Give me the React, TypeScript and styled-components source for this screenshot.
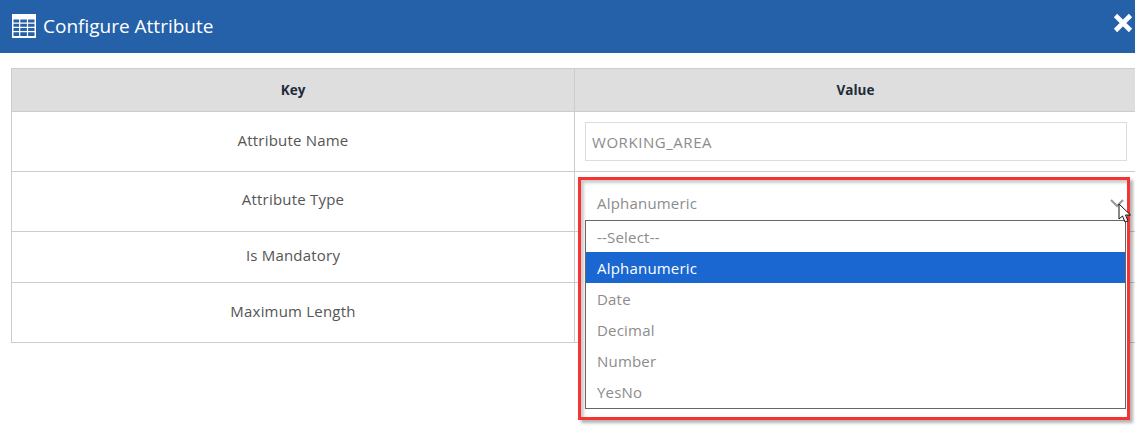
import React from "react";
import styled, { createGlobalStyle } from "styled-components";

const rows = [
  { key: "Attribute Name", height: 60, lift: 3 },
  { key: "Attribute Type", height: 60, lift: 5 },
  { key: "Is Mandatory", height: 51, lift: 4 },
  { key: "Maximum Length", height: 60, lift: 3 },
];

const options = ["--Select--", "Alphanumeric", "Date", "Decimal", "Number", "YesNo"];

const App = () => {
  return (
    <Page>
      <GlobalStyle />
      <Header>
        <Title>
          <svg width="26" height="26" viewBox="0 0 26 26">
            <rect x="1" y="1" width="24" height="24" fill="#fff" />
            <path
              d="M2.5 6.5h5.6v3H2.5zM9.3 6.5h6.6v3H9.3zM17.1 6.5h6.4v3h-6.4zM2.5 10.8h5.6v3H2.5zM9.3 10.8h6.6v3H9.3zM17.1 10.8h6.4v3h-6.4zM2.5 15h5.6v3H2.5zM9.3 15h6.6v3H9.3zM17.1 15h6.4v3h-6.4zM2.5 19.2h5.6v3.8H2.5zM9.3 19.2h6.6v3.8H9.3zM17.1 19.2h6.4v3.8h-6.4z"
              fill="#2561a8"
            />
          </svg>
          Configure Attribute
        </Title>
        <CloseIcon width="22" height="22" viewBox="0 0 22 22">
          <path d="M3.5 3.5l15 15M18.5 3.5l-15 15" stroke="#fff" strokeWidth="4.6" />
        </CloseIcon>
      </Header>
      <Body>
        <Table>
          <HeadCell>Key</HeadCell>
          <HeadCell>Value</HeadCell>
          {rows.map((row, i) => (
            <React.Fragment key={row.key}>
              <KeyCell height={row.height} lift={row.lift}>
                {row.key}
              </KeyCell>
              <ValueCell height={row.height}>
                {i === 0 && <NameInput>WORKING_AREA</NameInput>}
              </ValueCell>
            </React.Fragment>
          ))}
        </Table>
        <Highlight>
          <Selected>
            Alphanumeric
            <svg width="14" height="9" viewBox="0 0 14 9">
              <path d="M1 1l6 6 6-6" fill="none" stroke="#9a9a9a" strokeWidth="2.2" />
            </svg>
          </Selected>
          <List>
            {options.map((option) => (
              <Option key={option} active={option === "Alphanumeric"}>
                {option}
              </Option>
            ))}
          </List>
        </Highlight>
        <Cursor width="14" height="20" viewBox="0 0 14 20">
          <path d="M1 1v15l3.5-3 2.5 6 3-1.2-2.5-5.8h5z" fill="#fff" stroke="#111" strokeWidth="1" />
        </Cursor>
      </Body>
    </Page>
  );
};

export default App;

const GlobalStyle = createGlobalStyle`
  html, body {
    margin: 0;
    padding: 0;
    background: #fff;
    overflow: hidden;
  }
  * {
    box-sizing: border-box;
  }
`;

const Page = styled.div`
  width: 1135px;
  height: 440px;
  font-family: "Open Sans", "Noto Sans", sans-serif;
  font-size: 15px;
  letter-spacing: 0.2px;
  overflow: hidden;
`;

const Header = styled.div`
  height: 53px;
  background: #2561a8;
  display: flex;
  justify-content: space-between;
  align-items: center;
  padding: 0 1px 0 11px;
`;

const Title = styled.div`
  display: flex;
  align-items: center;
  gap: 6px;
  color: #fff;
  font-size: 19px;
  letter-spacing: 0;
  margin-bottom: 2px;
`;

const CloseIcon = styled.svg`
  margin-bottom: 7px;
`;

const Body = styled.div`
  position: relative;
  padding: 15px 0 0 11px;
`;

const Table = styled.div`
  width: 1126px;
  display: grid;
  grid-template-columns: 563px 1fr;
  border-top: 1px solid #ccc;
  border-left: 1px solid #ccc;
`;

const HeadCell = styled.div`
  height: 43px;
  background: #dedede;
  color: #1c2b3a;
  font-weight: 700;
  font-size: 13.5px;
  letter-spacing: 0;
  display: flex;
  align-items: center;
  justify-content: center;
  border-right: 1px solid #ccc;
  border-bottom: 1px solid #ccc;
`;

const KeyCell = styled.div<{ height: number; lift: number }>`
  height: ${({ height }) => height}px;
  color: #555;
  display: flex;
  align-items: center;
  justify-content: center;
  padding-bottom: ${({ lift }) => lift}px;
  border-right: 1px solid #ccc;
  border-bottom: 1px solid #ccc;
`;

const ValueCell = styled.div<{ height: number }>`
  height: ${({ height }) => height}px;
  padding: 10px 8px 0 10px;
  border-bottom: 1px solid #ccc;
`;

const NameInput = styled.div`
  width: 542px;
  height: 39px;
  border: 1px solid #ddd;
  color: #8c8c8c;
  letter-spacing: 0.55px;
  padding: 0 6px;
  display: flex;
  align-items: center;
`;

const Highlight = styled.div`
  position: absolute;
  left: 578px;
  top: 124px;
  width: 552px;
  height: 243px;
  border: 3px solid #f63333;
  background: #fff;
  box-shadow: 3px 3px 3px rgba(0, 0, 0, 0.3), inset 3px 3px 3px rgba(0, 0, 0, 0.2);
  padding: 0 1px 0 4px;
`;

const Selected = styled.div`
  height: 40px;
  padding: 6px 2px 0 12px;
  color: #8c8c8c;
  display: flex;
  align-items: center;
  justify-content: space-between;
`;

const List = styled.div`
  height: 189px;
  border: 1px solid #666;
  background: #fff;
`;

const Option = styled.div<{ active: boolean }>`
  height: 31px;
  padding: 0 11px;
  display: flex;
  align-items: center;
  background: ${({ active }) => (active ? "#1a67d2" : "transparent")};
  color: ${({ active }) => (active ? "#fff" : "#8c8c8c")};
`;

const Cursor = styled.svg`
  position: absolute;
  left: 1118px;
  top: 150px;
`;
